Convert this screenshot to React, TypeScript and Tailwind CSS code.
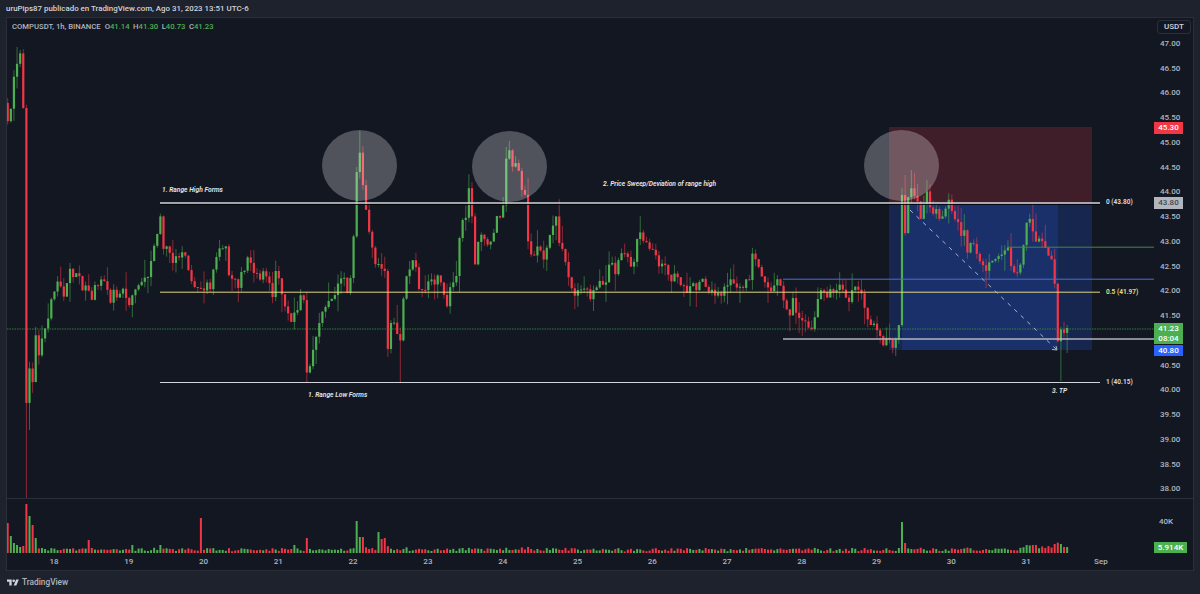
const PATH: [number, number][] = [
  [8, 120], [11, 108], [14, 76], [20, 52], [23, 77], [26, 409], [29, 363], [32, 395], [36, 333], [39, 350], [45, 325], [50, 316],
  [53, 292], [60, 285], [66, 295], [69, 268], [80, 280], [90, 297], [100, 278], [110, 298], [120, 291], [130, 303], [136, 290],
  [147, 279], [157, 236], [160, 204], [163, 252], [169, 250], [173, 262], [182, 250], [188, 268], [195, 290], [202, 295], [210, 285],
  [220, 250], [227, 250], [230, 280], [238, 288], [247, 258], [253, 270], [267, 278], [273, 293], [277, 262], [280, 295], [283, 300],
  [293, 322], [300, 297], [304, 303], [307, 370], [311, 363], [313, 345], [320, 315], [330, 305], [340, 275], [347, 288], [351, 280],
  [354, 227], [357, 162], [360, 150], [363, 181], [366, 212], [372, 240], [375, 265], [378, 265], [385, 268], [388, 358], [392, 310],
  [397, 330], [400, 345], [404, 290], [410, 262], [416, 270], [423, 300], [430, 275], [433, 285], [440, 280], [447, 300], [450, 290],
  [453, 285], [457, 267], [460, 230], [463, 225], [467, 215], [469, 193], [472, 222], [475, 262], [478, 245], [483, 235], [487, 237],
  [490, 247], [493, 232], [497, 220], [500, 222], [503, 202], [506, 156], [509, 155], [512, 160], [515, 162], [518, 170], [522, 195],
  [525, 198], [528, 235], [532, 265], [535, 260], [538, 250], [542, 243], [545, 265], [548, 237], [552, 230], [557, 215], [560, 248],
  [563, 248], [567, 265], [570, 298], [573, 290], [577, 295], [583, 290], [590, 295], [597, 285], [605, 285], [608, 265], [615, 270],
  [620, 255], [627, 260], [633, 268], [637, 237], [643, 240], [650, 248], [657, 258], [663, 265], [672, 277], [677, 275], [687, 295],
  [693, 290], [702, 277], [708, 290], [717, 300], [722, 290], [730, 285], [733, 280], [743, 290], [748, 280], [753, 255], [757, 258],
  [762, 282], [767, 285], [772, 290], [778, 282], [783, 295], [787, 317], [793, 300], [799, 315], [805, 320], [812, 335], [815, 312],
  [821, 288], [825, 292], [830, 290], [833, 300], [837, 285], [842, 295], [848, 300], [855, 292], [862, 298], [868, 315], [873, 325],
  [878, 337], [883, 340], [892, 345], [897, 330], [899, 330], [902, 191], [905, 228], [908, 200], [911, 192], [915, 198], [920, 217],
  [927, 190], [930, 213], [933, 213], [940, 215], [945, 216], [948, 205], [952, 210], [957, 220], [962, 240], [964, 235], [968, 250],
  [975, 245], [980, 265], [985, 265], [992, 265], [998, 255], [1004, 247], [1008, 248], [1013, 270], [1020, 265], [1025, 232],
  [1030, 220], [1033, 232], [1038, 245], [1043, 245], [1048, 258], [1052, 262], [1055, 292], [1058, 345], [1061, 329], [1064, 333],
  [1067, 328],
]

// hand read wicks, [x, top, bottom]
const WICKS: [number, number | null, number | null][] = [
  [17, 47, null], [20, 50, null], [26, null, 498], [29, null, 430], [307, null, 382], [360, 131, null], [363, 146, null], [400, null, 382],
  [505, 147, null], [508, 141, null], [911, 170, null], [905, 175, null], [1061, null, 381], [1067, 325, 353], [1064, 322, null],
]

const rng = (() => {
  let s = 41
  return () => {
    s = (s * 1664525 + 1013904223) % 4294967296
    return s / 4294967296
  }
})()

function pathAt(x: number) {
  for (let i = 1; i < PATH.length; i++) {
    if (x <= PATH[i][0]) {
      const [x0, y0] = PATH[i - 1]
      const [x1, y1] = PATH[i]
      return y0 + ((y1 - y0) * (x - x0)) / (x1 - x0)
    }
  }
  return PATH[PATH.length - 1][1]
}

const candles = Array.from({ length: 341 }, (_, i) => ({ x: 7.7 + 3.116 * i, close: 0, open: 0, top: 0, bottom: 0, vol: 0 }))
candles.forEach((c, i) => {
  const big = i > 336 || c.x < 30
  c.close = pathAt(c.x) + (big ? 0 : (rng() - 0.5) * 13)
  c.open = i === 0 ? 103 : candles[i - 1].close
  const hi = Math.min(c.open, c.close)
  const lo = Math.max(c.open, c.close)
  c.top = hi - rng() * rng() * 20
  c.bottom = lo + rng() * rng() * 20
  const w = WICKS.find((k) => Math.abs(k[0] - c.x) < 1.6)
  if (w) {
    if (w[1] !== null) c.top = w[1]
    if (w[2] !== null) c.bottom = w[2]
  }
  c.vol = 1.5 + rng() * 3 + (lo - hi) * 0.06 + (c.x > 1020 ? 3 : 0)
})

const VOLS: [number, number][] = [
  [8, 30], [11, 17], [14, 10], [17, 8], [20, 6], [23, 7], [26, 49], [29, 37], [32, 28], [35, 15], [88, 13], [133, 8], [160, 8],
  [200, 35], [295, 8], [306, 15], [357, 32], [360, 16], [363, 16], [378, 21], [382, 14], [385, 15], [901, 31], [905, 10], [1033, 8],
  [1036, 8], [1054, 9], [1060, 9],
]
VOLS.forEach(([x, h]) => {
  const c = candles.find((k) => Math.abs(k.x - x) < 1.6)
  if (c) c.vol = h
})

const GREEN = "#4caf50"
const RED = "#f23645"

function ChartDrawing() {
  return (
    <svg className="absolute inset-0 h-full w-full" viewBox="7 18 1147 480">
      <rect x="889" y="127" width="203" height="76" fill="#f23645" fillOpacity="0.2" />
      <rect x="889" y="203" width="203" height="147" fill="#2962ff" fillOpacity="0.2" />
      <rect x="902" y="203" width="156" height="147" fill="#2962ff" fillOpacity="0.17" />
      <line x1="7" y1="329" x2="1154" y2="329" stroke="#2f8a40" strokeOpacity="0.6" strokeWidth="1.5" strokeDasharray="1.5 1" />
      {candles.map((c, i) => {
        const color = c.close <= c.open ? GREEN : RED
        const hi = Math.min(c.open, c.close)
        const h = Math.max(Math.abs(c.close - c.open), 1)
        return (
          <g key={i} fill={color}>
            <rect x={c.x - 0.5} y={c.top} width="1" height={c.bottom - c.top} fillOpacity="0.55" />
            <rect x={c.x - 1.1} y={hi} width="2.2" height={h} />
          </g>
        )
      })}
      <line x1="160" y1="204.5" x2="1100" y2="204.5" stroke="#000000" strokeOpacity="0.8" />
      <line x1="160" y1="203" x2="1100" y2="203" stroke="#d1d4dc" strokeWidth="1.3" />
      <line x1="160" y1="292.2" x2="1100" y2="292.2" stroke="#e3d77f" />
      <line x1="160" y1="382.5" x2="1100" y2="382.5" stroke="#d1d4dc" />
      <line x1="1007" y1="247.2" x2="1154" y2="247.2" stroke="#3f8a45" />
      <line x1="783" y1="279.2" x2="1154" y2="279.2" stroke="#4a6fd0" />
      <line x1="783" y1="339" x2="1154" y2="339" stroke="#b2b5be" strokeWidth="1.4" />
      <line x1="910" y1="210" x2="1056" y2="349" stroke="#b2b5be" strokeDasharray="4 5" />
      <path d="M1052 349.5 L1057 350 L1056 346" fill="none" stroke="#b2b5be" />
      <ellipse cx="359.5" cy="165.5" rx="37.5" ry="35.5" fill="#ffffff" fillOpacity="0.26" />
      <ellipse cx="509.5" cy="166.5" rx="37.5" ry="35.5" fill="#ffffff" fillOpacity="0.26" />
      <ellipse cx="901.5" cy="165.5" rx="37.5" ry="35.5" fill="#ffffff" fillOpacity="0.26" />
    </svg>
  )
}

function VolumeBars() {
  return (
    <svg className="absolute inset-0 h-full w-full" viewBox="7 499 1147 55">
      {candles.map((c, i) => (
        <rect key={i} x={c.x - 1} y={553 - c.vol} width="2" height={c.vol} fill={c.close <= c.open ? GREEN : RED} />
      ))}
    </svg>
  )
}

const PRICES = [
  "47.00", "46.50", "46.00", "45.50", "45.00", "44.50", "44.00", "43.50", "43.00", "42.50",
  "42.00", "41.50", "", "40.50", "40.00", "39.50", "39.00", "38.50", "38.00",
]
const DAYS = ["18", "19", "20", "21", "22", "23", "24", "25", "26", "27", "28", "29", "30", "31", "Sep"]

const labelClass = "absolute whitespace-nowrap text-[6.7px] leading-[8px] font-semibold italic text-[#e6e7ea]"
const fibClass = "absolute whitespace-nowrap text-[6.5px] leading-[8px] font-bold"

export default function App() {
  return (
    <div className="flex h-[594px] w-[1200px] flex-col overflow-hidden bg-[#1e222d] font-['Roboto',sans-serif] text-[#b2b5be]">
      <div className="flex h-[17px] items-center pl-[6px] text-[7.9px] font-medium text-[#d1d4dc]">
        uruPips87 publicado en TradingView.com, Ago 31, 2023 13:51 UTC-6
      </div>

      <div className="mx-[6px] grid h-[554px] grid-cols-[1147px_39px] grid-rows-[481px_55px_1fr] border border-[#2a2e39] bg-[#131722]">
        {/* main pane */}
        <div className="relative border-b border-[#2a2e39]">
          <ChartDrawing />
          <div className="absolute left-[5px] top-[4px] flex gap-[4px] text-[7.7px] font-medium leading-[10px]">
            <span>COMPUSDT, 1h, BINANCE</span>
            <span className="flex gap-[3.5px]">
              <span>O<span className="text-[#4caf50]">41.14</span></span>
              <span>H<span className="text-[#4caf50]">41.30</span></span>
              <span>L<span className="text-[#4caf50]">40.73</span></span>
              <span>C<span className="text-[#4caf50]">41.23</span></span>
            </span>
          </div>
          <span className={`${labelClass} left-[155px] top-[168px]`}>1. Range High Forms</span>
          <span className={`${labelClass} left-[596px] top-[162px]`}>2. Price Sweep/Deviation of range high</span>
          <span className={`${labelClass} left-[301px] top-[373px]`}>1. Range Low Forms</span>
          <span className={`${labelClass} left-[1045px] top-[369px]`}>3. TP</span>
          <span className={`${fibClass} left-[1099px] top-[180px] text-[#d1d4dc]`}>0 (43.80)</span>
          <span className={`${fibClass} left-[1099px] top-[270px] text-[#e3d77f]`}>0.5 (41.97)</span>
          <span className={`${fibClass} left-[1099px] top-[360px] text-[#d1d4dc]`}>1 (40.15)</span>
        </div>

        {/* price axis */}
        <div className="relative flex flex-col items-start border-b border-[#2a2e39] text-[8px] font-medium">
          <div className="ml-[3px] mt-[2px] flex h-[16px] w-[34px] items-center justify-center rounded-[3px] border border-[#2a2e39] text-[8px] text-[#d1d4dc]">
            USDT
          </div>
          <div className="ml-[6px] -mt-[2.6px] flex flex-col">
            {PRICES.map((p, i) => (
              <span key={i} className="flex h-[24.75px] items-center">{p}</span>
            ))}
          </div>
          <span className="absolute left-0 top-[104px] flex h-[12px] w-[29px] items-center justify-center bg-[#f23645] text-white">45.30</span>
          <span className="absolute left-0 top-[179px] flex h-[12px] w-[29px] items-center justify-center bg-[#b2b5be] text-[#434651]">43.80</span>
          <span className="absolute left-0 top-[305px] flex h-[21px] w-[29px] flex-col items-center justify-center bg-[#4caf50] leading-[10px] text-white">
            <span>41.23</span>
            <span>08:04</span>
          </span>
          <span className="absolute left-0 top-[327px] flex h-[11px] w-[29px] items-center justify-center bg-[#2962ff] text-white">40.80</span>
        </div>

        {/* volume pane */}
        <div className="relative">
          <VolumeBars />
        </div>
        <div className="relative text-[8px] font-medium">
          <span className="absolute left-[5px] top-[17px]">40K</span>
          <span className="absolute bottom-[1px] left-0 flex h-[11px] w-[33px] items-center justify-center bg-[#4caf50] text-white">5.914K</span>
        </div>

        {/* time axis */}
        <div className="flex items-center pl-[9.6px] text-[8px] font-medium">
          {DAYS.map((d) => (
            <span key={d} className="w-[74.79px] text-center">{d}</span>
          ))}
        </div>
        <div />
      </div>

      <div className="flex flex-1 items-center gap-[3px] pl-[7px] text-[8.3px] font-medium text-[#b2b5be]">
        <svg width="12" height="7" viewBox="0 4 36 18" fill="#d1d4dc">
          <path d="M14 22H7V11H0V4h14v18zM28 22h-8l7.5-18h8L28 22z" />
          <circle cx="20" cy="8" r="4" />
        </svg>
        <span>TradingView</span>
      </div>
    </div>
  )
}
